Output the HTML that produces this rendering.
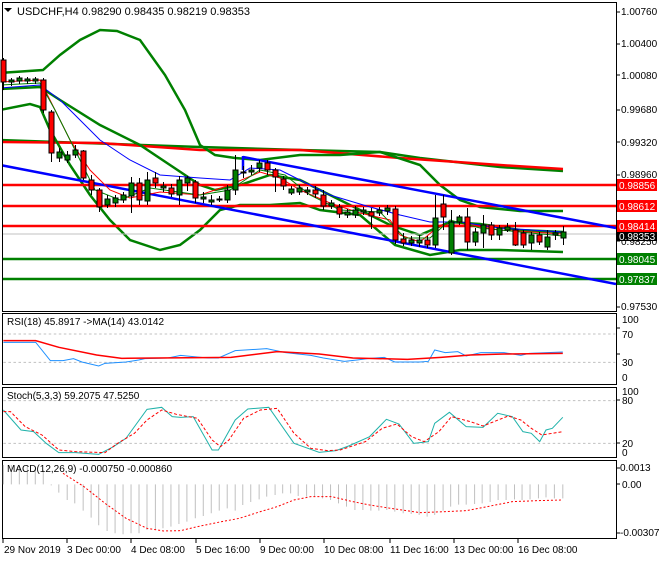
<!DOCTYPE html>
<html><head><meta charset="utf-8"><style>
body{margin:0;background:#fff;width:660px;height:560px;overflow:hidden;font-family:"Liberation Sans",sans-serif}
svg text{font-family:"Liberation Sans",sans-serif;font-size:10px;fill:#000}
</style></head><body>
<svg width="660" height="560" xmlns="http://www.w3.org/2000/svg">
<rect width="660" height="560" fill="#fff"/>
<g fill="none" stroke="#000" stroke-width="1">
<rect x="2.5" y="2.5" width="614" height="309"/>
<rect x="2.5" y="313.5" width="614" height="71"/>
<rect x="2.5" y="387.5" width="614" height="70"/>
<rect x="2.5" y="460.5" width="614" height="78"/>
</g>
<g clip-path="url(#c)">
<clipPath id="c"><rect x="3" y="3" width="613" height="308"/></clipPath>
<polyline fill="none" stroke="#008000" stroke-width="2.5" points="0,140 200,147 300,150 380,152 420,158 500,167 563,171"/>
<polyline fill="none" stroke="#f00" stroke-width="2.5" points="0,142 100,143 200,150 300,150 400,158 500,165 563,169"/>
<polyline fill="none" stroke="#008000" stroke-width="2.5" points="0,73 43,70 60,55 80,40 100,30 117,31 140,40 165,75 185,110 200,145 215,155 235,158 260,160 300,155 340,155 380,152 420,165 440,185 460,200 480,207 520,211 563,211"/>
<polyline fill="none" stroke="#008000" stroke-width="2.5" points="0,89 40,87 60,100 100,125 140,145 170,165 200,185 215,190 240,185 270,175 300,180 330,195 360,210 390,225 420,235 450,222 480,224 520,230 563,232"/>
<polyline fill="none" stroke="#008000" stroke-width="2.5" points="0,110 30,104 40,107 50,130 70,165 90,195 110,220 130,240 160,250 180,245 200,230 220,210 240,205 270,205 300,203 320,210 360,215 395,245 430,255 460,250 500,250 563,252"/>
<g stroke-width="2.5"><line x1="0" y1="185" x2="616" y2="185" stroke="#f00"/><line x1="0" y1="206" x2="616" y2="206" stroke="#f00"/><line x1="0" y1="226" x2="616" y2="226" stroke="#f00"/><line x1="0" y1="259" x2="616" y2="259" stroke="#008000"/><line x1="0" y1="279" x2="616" y2="279" stroke="#008000"/></g>
<line x1="0" y1="234" x2="616" y2="234" stroke="#c0c0c0"/>
<g stroke="#00f" stroke-width="2.5"><line x1="0" y1="165" x2="616" y2="284"/><line x1="243" y1="157" x2="616" y2="228"/><line x1="243" y1="156" x2="243" y2="170"/></g>
<polyline fill="none" stroke="#00f" stroke-width="1" points="0,88 40,85 60,100 80,120 100,140 130,160 160,175 200,178 230,180 250,168 280,170 300,180 330,195 370,207 400,215 430,222 460,222 500,228 563,232"/>
<polyline fill="none" stroke="#f00" stroke-width="1" points="0,82 40,80 50,100 70,140 90,170 110,190 130,198 160,192 200,195 230,185 260,172 280,178 300,190 330,203 360,213 390,220 400,235 420,242 440,225 470,225 500,230 563,234"/>
<polyline fill="none" stroke="#008000" stroke-width="1" points="0,85 40,83 55,110 75,150 95,190 120,200 150,188 200,195 230,190 260,170 285,175 310,195 340,210 380,212 405,238 430,238 450,220 480,228 520,232 563,236"/>
</g>
<g stroke="#000" stroke-width="1">
<path fill="none" d="M3.5 58V90M11.5 78V86M19.5 76V84M27.5 77V84M35.5 77V84M43.5 78V113M51.5 110V162M59.5 148V162M67.5 151V163M75.5 145V158M83.5 150V180M91.5 175V195M99.5 188V212M107.5 195V208M115.5 195V207M123.5 192V203M131.5 177V213M139.5 178V205M147.5 172V205M155.5 172V188M163.5 182V192M171.5 184V197M179.5 176V205M187.5 176V191M195.5 180V203M203.5 192V203M211.5 195V205M219.5 196V202M227.5 185V203M235.5 155V195M243.5 166V178M251.5 165V175M259.5 160V172M267.5 160V175M275.5 168V192M283.5 176V190M291.5 186V195M299.5 185V195M307.5 187V195M315.5 186V198M323.5 190V210M331.5 200V209M339.5 204V218M347.5 209V218M355.5 206V218M363.5 207V215M371.5 208V229M379.5 207V216M387.5 205V215M395.5 206V244M403.5 233V246M411.5 236V246M419.5 235V247M427.5 236V248M435.5 195V248M443.5 195V230M451.5 210V255M459.5 215V225M467.5 208V250M475.5 228V246M483.5 215V248M491.5 222V240M499.5 225V240M507.5 223V232M515.5 222V246M523.5 230V248M531.5 232V250M539.5 232V245M547.5 230V250M555.5 230V240M563.5 226V245"/>
<path fill="#f00" d="M1 60h5v22h-5zM41 80h5v30h-5zM49 112h5v41h-5zM81 151h5v27h-5zM89 180h5v10h-5zM97 190h5v17h-5zM137 183h5v17h-5zM153 178h5v5h-5zM169 188h5v6h-5zM193 182h5v16h-5zM265 163h5v7h-5zM273 170h5v7h-5zM281 179h5v7h-5zM313 190h5v4h-5zM321 195h5v11h-5zM337 207h5v7h-5zM369 212h5v4h-5zM393 209h5v31h-5zM401 239h5v4h-5zM425 240h5v5h-5zM441 204h5v13h-5zM465 217h5v25h-5zM489 225h5v10h-5zM513 230h5v15h-5zM521 233h5v12h-5zM537 235h5v7h-5z"/>
<path fill="#008000" d="M9 80h5v2h-5zM17 78h5v3h-5zM25 79h5v2h-5zM33 79h5v2h-5zM57 152h5v6h-5zM65 155h5v5h-5zM73 150h5v5h-5zM105 199h5v6h-5zM113 198h5v5h-5zM121 195h5v5h-5zM129 183h5v13h-5zM145 180h5v21h-5zM161 186h5v2h-5zM177 180h5v15h-5zM185 178h5v5h-5zM201 197h5v2h-5zM209 200h5v2h-5zM217 199h5v1h-5zM225 190h5v10h-5zM233 170h5v20h-5zM241 172h5v1h-5zM249 170h5v2h-5zM257 163h5v5h-5zM289 189h5v4h-5zM297 188h5v4h-5zM305 190h5v2h-5zM329 203h5v3h-5zM345 212h5v3h-5zM353 210h5v5h-5zM361 210h5v2h-5zM377 210h5v3h-5zM385 208h5v3h-5zM409 240h5v3h-5zM417 240h5v3h-5zM433 218h5v27h-5zM449 222h5v31h-5zM457 217h5v5h-5zM473 232h5v10h-5zM481 225h5v8h-5zM497 228h5v7h-5zM505 227h5v3h-5zM529 235h5v8h-5zM545 237h5v10h-5zM553 233h5v2h-5zM561 232h5v6h-5z"/>
</g>
<path d="M4 8h8l-4 4z" fill="#000"/>
<text x="17" y="15" style="font-size:11px">USDCHF,H4  0.98290 0.98435 0.98219 0.98353</text>
<g stroke="#000"><path d="M616 12h4M616 44h4M616 75h4M616 110h4M616 142h4M616 175h4M616 241h4M616 307h4M616 328h4M616 354h4M616 400h4M616 443h4M616 468h4M616 484h4M616 533h4"/></g>
<text x="621" y="15">1.00760</text><text x="621" y="47">1.00400</text><text x="621" y="79">1.00080</text><text x="621" y="113">0.99680</text><text x="621" y="146">0.99320</text><text x="621" y="178">0.98960</text><text x="621" y="245">0.98250</text><text x="621" y="310">0.97530</text>
<rect x="617" y="232" width="40" height="9" fill="#000"/><text x="619" y="240" style="fill:#fff">0.98353</text>
<rect x="617" y="179" width="40" height="12" fill="#f00"/><text x="619" y="189" style="fill:#fff">0.98856</text>
<rect x="617" y="200" width="40" height="12" fill="#f00"/><text x="619" y="210" style="fill:#fff">0.98612</text>
<rect x="617" y="220" width="40" height="12" fill="#f00"/><text x="619" y="230" style="fill:#fff">0.98414</text>
<rect x="617" y="253" width="40" height="12" fill="#008000"/><text x="619" y="263" style="fill:#fff">0.98045</text>
<rect x="617" y="273" width="40" height="12" fill="#008000"/><text x="619" y="283" style="fill:#fff">0.97837</text>
<text x="622" y="323">100</text><text x="622" y="338">70</text><text x="622" y="366">30</text><text x="622" y="381">0</text>
<text x="622" y="395">100</text><text x="622" y="404">80</text><text x="622" y="447">20</text><text x="622" y="456">0</text>
<text x="620" y="471">0.0013</text><text x="622" y="488">0.00</text><text x="620" y="536">-0.00307</text>
<g transform="translate(0,300) scale(0.42,0.3333)" fill="none">
<g stroke="#c0c0c0" stroke-dasharray="6,6" stroke-width="3"><path d="M8 102H1465M8 187H1465M8 302H1465M8 430H1465"/></g>
<polyline vector-effect="non-scaling-stroke" stroke="#1e90ff" stroke-width="1" points="8,127 85,127 120,182 150,182 175,176 195,186 235,198 250,190 300,186 330,180 345,176 400,174 430,166 460,170 495,174 520,174 560,152 635,146 680,158 740,166 770,174 820,184 850,180 875,176 915,172 940,186 1000,186 1020,184 1035,150 1060,158 1090,155 1110,168 1145,158 1200,158 1240,166 1260,160 1340,156"/>
<polyline vector-effect="non-scaling-stroke" stroke="#f00" stroke-width="1.5" points="8,122 85,122 140,142 230,165 290,175 550,172 660,155 760,162 840,174 970,178 1050,172 1120,165 1200,162 1340,160"/>
<polyline vector-effect="non-scaling-stroke" stroke="#20b2aa" stroke-width="1" points="8,330 50,390 80,395 110,430 140,458 180,458 235,463 270,440 300,415 350,328 385,322 410,350 430,352 460,350 505,450 520,450 560,360 590,327 640,322 700,430 760,457 800,452 830,438 880,410 920,358 950,372 985,430 1020,425 1035,370 1070,337 1110,380 1150,382 1185,340 1220,350 1245,395 1265,400 1285,425 1300,390 1315,385 1340,352"/>
<polyline vector-effect="non-scaling-stroke" stroke="#f00" stroke-width="1" stroke-dasharray="3,2" points="8,335 25,335 60,380 100,405 140,450 180,455 250,458 280,430 320,400 350,360 385,330 420,343 470,355 505,420 525,440 545,420 580,355 620,330 660,325 700,400 740,445 780,452 810,450 870,425 910,385 945,372 980,410 1010,425 1045,395 1075,350 1120,365 1150,378 1210,348 1240,360 1265,385 1290,405 1325,398 1340,395"/>
<path vector-effect="non-scaling-stroke" stroke="#c0c0c0" stroke-width="1" d="M8 553V495M27 553V495M46 553V497M65 553V500M84 553V505M103 553V510M122 553V556M140 553V578M160 553V600M178 553V610M198 553V632M217 553V653M235 553V676M255 553V693M274 553V700M293 553V703M312 553V700M331 553V700M350 553V690M370 553V690M388 553V685M407 553V680M426 553V672M445 553V665M465 553V655M484 553V648M503 553V640M522 553V632M541 553V625M560 553V632M578 553V615M597 553V606M617 553V598M635 553V590M655 553V585M673 553V580M692 553V580M710 553V588M730 553V590M749 553V590M768 553V595M787 553V600M806 553V610M825 553V620M845 553V630M864 553V630M883 553V632M902 553V632M921 553V630M940 553V635M960 553V640M979 553V642M998 553V645M1017 553V650M1035 553V645M1055 553V632M1073 553V620M1092 553V614M1110 553V614M1130 553V612M1148 553V610M1167 553V606M1186 553V600M1205 553V600M1225 553V598M1243 553V600M1262 553V598M1282 553V595M1300 553V592M1320 553V595M1340 553V595"/>
<polyline vector-effect="non-scaling-stroke" stroke="#f00" stroke-width="1" stroke-dasharray="2,2" points="150,520 200,560 250,610 300,655 350,685 390,693 430,692 470,680 520,667 570,655 620,635 660,620 700,600 740,590 790,590 840,605 880,615 930,625 1000,638 1060,635 1110,632 1160,620 1220,605 1280,602 1340,600"/>
</g>
<text x="7" y="325">RSI(18) 45.8917  -&gt;MA(14) 43.0142</text>
<text x="7" y="399">Stoch(5,3,3) 59.2075 47.5250</text>
<text x="7" y="472">MACD(12,26,9) -0.000750 -0.000860</text>
<g stroke="#000"><path d="M3 539v4M67 539v4M131 539v4M196 539v4M260 539v4M324 539v4M390 539v4M454 539v4M518 539v4"/></g>
<text x="4" y="553">29 Nov 2019</text><text x="67" y="553">3 Dec 00:00</text><text x="131" y="553">4 Dec 08:00</text><text x="196" y="553">5 Dec 16:00</text><text x="260" y="553">9 Dec 00:00</text><text x="324" y="553">10 Dec 08:00</text><text x="390" y="553">11 Dec 16:00</text><text x="454" y="553">13 Dec 00:00</text><text x="518" y="553">16 Dec 08:00</text>
</svg>
</body></html>
